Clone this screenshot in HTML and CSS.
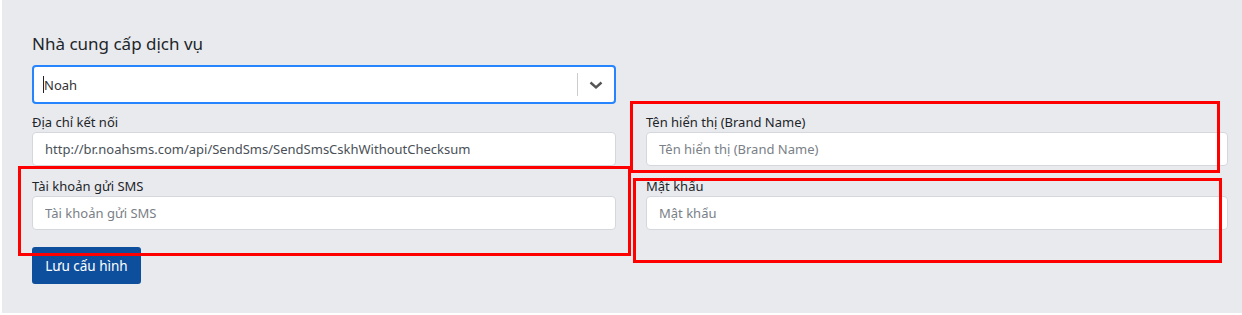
FILE: index.html
```html
<!DOCTYPE html>
<html>
<head>
  <title>Cấu hình SMS</title>
  <link rel="stylesheet" href="styles.css">
</head>
<body>
  <div class="page">
    <h2 class="section-title">Nhà cung cấp dịch vụ</h2>

    <!-- CHỌN NHÀ CUNG CẤP -->
    <div class="select-box">
      <div class="select-value"><span class="caret"></span>Noah</div>
      <div class="select-sep"></div>
      <div class="select-arrow">
        <svg width="20" height="20" viewBox="0 0 20 20"><path d="M4.5 7.5 L10 12.5 L15.5 7.5" fill="none" stroke="#555" stroke-width="2.4"/></svg>
      </div>
    </div>

    <!-- CÁC TRƯỜNG CẤU HÌNH -->
    <div class="fields">
      <div class="field">
        <label>Địa chỉ kết nối</label>
        <input type="text" value="http://br.noahsms.com/api/SendSms/SendSmsCskhWithoutChecksum">
      </div>
      <div class="field">
        <label>Tên hiển thị (Brand Name)</label>
        <input type="text" placeholder="Tên hiển thị (Brand Name)">
      </div>
      <div class="field">
        <label>Tài khoản gửi SMS</label>
        <input type="text" placeholder="Tài khoản gửi SMS">
      </div>
      <div class="field">
        <label>Mật khẩu</label>
        <input type="text" placeholder="Mật khẩu">
      </div>
    </div>

    <button class="btn-save">Lưu cấu hình</button>
  </div>

  <!-- KHUNG ĐÁNH DẤU -->
  <div class="mark mark-brand"></div>
  <div class="mark mark-account"></div>
  <div class="mark mark-password"></div>
</body>
</html>
```

FILE: styles.css
```css
body {
  margin: 0;
  background-color: #fff;
  font-family: "Noto Sans", "Open Sans", sans-serif;
}
.page {
  margin-left: 2px;
  height: 313px;
  box-sizing: border-box;
  background-color: #e9eaee;
  padding: 32px 14px 0 30px;
}
.section-title {
  margin: 0 0 9px 0;
  font-size: 17px;
  font-weight: normal;
  line-height: 24px;
  color: #212529;
}
.select-box {
  width: 584px;
  height: 39px;
  box-sizing: border-box;
  border: 2px solid #2684ff;
  border-radius: 4px;
  background: #fff;
  display: flex;
  align-items: center;
}
.select-value {
  flex: 1;
  padding-left: 9px;
  font-size: 13px;
  color: #333;
  display: flex;
  align-items: center;
}
.caret {
  width: 1px;
  height: 17px;
  background: #222;
}
.select-sep {
  width: 1px;
  height: 23px;
  background: #ccc;
}
.select-arrow {
  width: 36px;
  display: flex;
  justify-content: center;
  align-items: center;
}
.fields {
  display: grid;
  grid-template-columns: 584px 582px;
  column-gap: 30px;
  row-gap: 10px;
  margin-top: 8px;
}
.field label {
  display: block;
  font-size: 13px;
  line-height: 20px;
  color: #212529;
}
.field input {
  display: block;
  width: 100%;
  height: 34px;
  box-sizing: border-box;
  border: 1px solid #d4d7dc;
  border-radius: 4px;
  padding: 0 12px;
  font-family: "Noto Sans", "Open Sans", sans-serif;
  font-size: 13px;
  color: #495057;
  background: #fff;
}
.field input::placeholder {
  color: #7a8087;
}
.btn-save {
  margin-top: 17px;
  width: 109px;
  height: 37px;
  border: none;
  border-radius: 3px;
  background-color: #0e4f9d;
  color: #fff;
  font-family: "Noto Sans", "Open Sans", sans-serif;
  font-size: 13.5px;
  padding: 0;
}
.mark {
  position: absolute;
  border: 3px solid #ff0000;
  box-sizing: border-box;
}
.mark-brand {
  left: 630px;
  top: 101px;
  width: 590px;
  height: 72px;
}
.mark-account {
  left: 18px;
  top: 166px;
  width: 613px;
  height: 90px;
}
.mark-password {
  left: 633px;
  top: 178px;
  width: 589px;
  height: 85px;
}
```
